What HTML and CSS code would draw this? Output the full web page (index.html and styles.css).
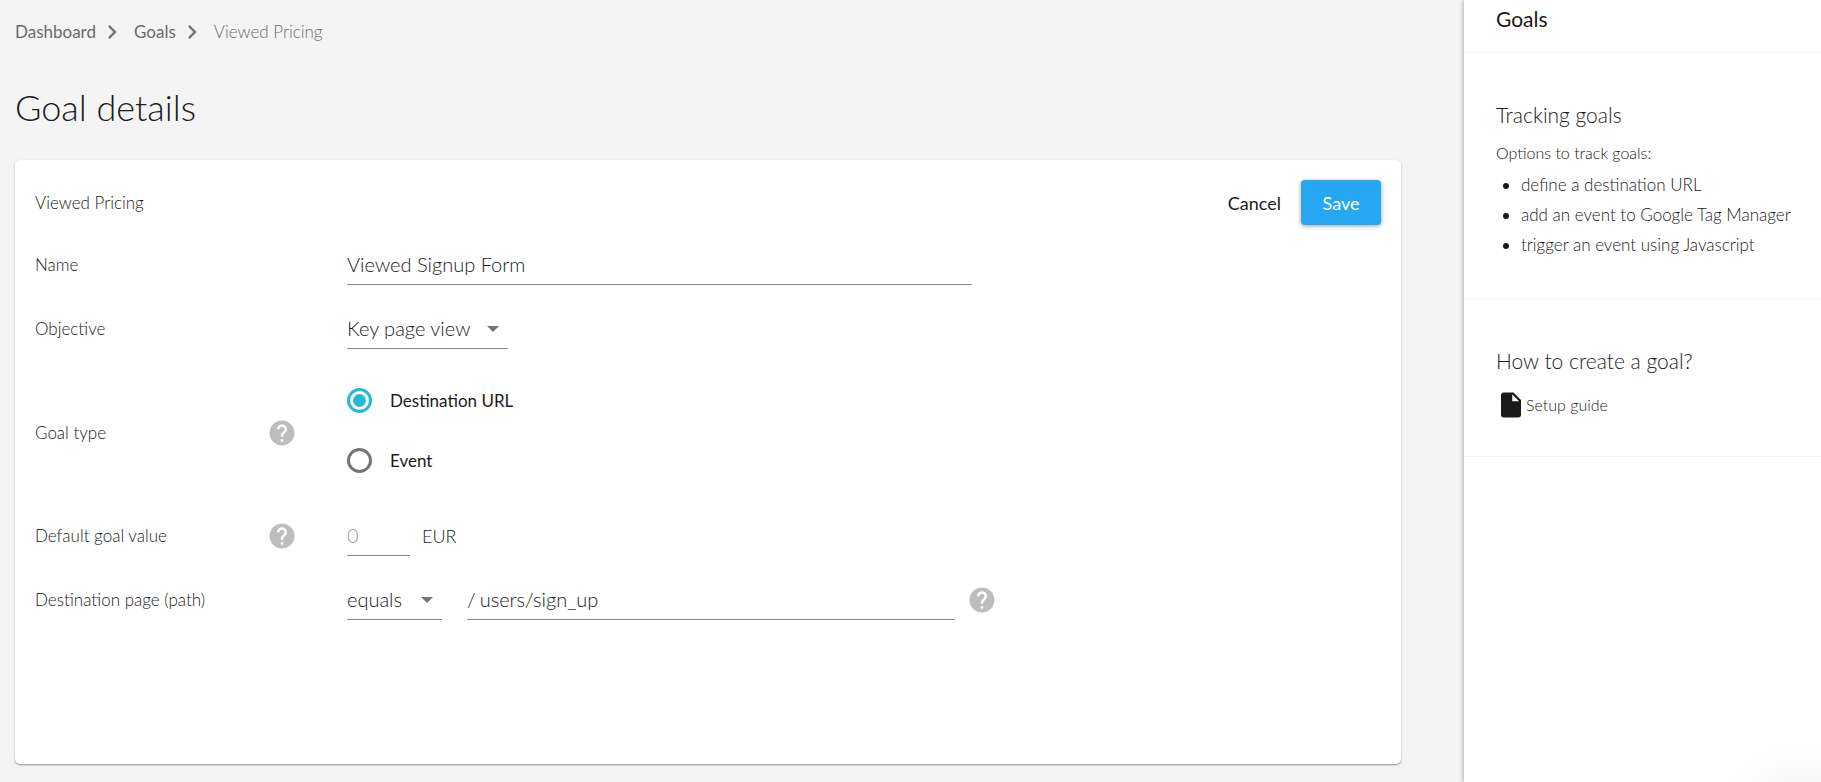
FILE: index.html
```html
<!DOCTYPE html>
<html lang="en">
<head>
<meta charset="utf-8">
<title>Goal details</title>
<link rel="stylesheet" href="styles.css">
</head>
<body>
<svg class="sprite" aria-hidden="true">
  <symbol id="chevron" viewBox="0 0 24 24"><path d="M10 6 8.590 7.410 13.170 12l-4.580 4.590L10 18l6-6z"/></symbol>
  <symbol id="help" viewBox="0 0 24 24"><path d="M12 2C6.480 2 2 6.480 2 12s4.480 10 10 10 10-4.480 10-10S17.520 2 12 2zm1 17h-2v-2h2v2zm2.070-7.750l-.9.920C13.450 12.900 13 13.500 13 15h-2v-.5c0-1.100.450-2.100 1.170-2.830l1.240-1.260c.370-.360.590-.860.590-1.410 0-1.100-.9-2-2-2s-2 .9-2 2H8c0-2.210 1.790-4 4-4s4 1.790 4 4c0 .880-.360 1.680-.930 2.250z"/></symbol>
  <symbol id="arrow" viewBox="0 0 12 6"><path d="M0 0h12L6 6z"/></symbol>
  <symbol id="file" viewBox="0 0 24 24"><path d="M6 2c-1.100 0-1.990.9-1.990 2L4 20c0 1.100.890 2 1.990 2H18c1.100 0 2-.9 2-2V8l-6-6H6zm7 7V3.500L18.500 9H13z"/></symbol>
</svg>
<div class="page">
  <main class="main">
    <nav class="crumbs" aria-label="Breadcrumb">
      <a href="#dashboard">Dashboard</a>
      <svg class="chevron"><use href="#chevron"/></svg>
      <a href="#goals">Goals</a>
      <svg class="chevron"><use href="#chevron"/></svg>
      <span class="current">Viewed Pricing</span>
    </nav>
    <h1 class="title">Goal details</h1>
    <form class="card">
      <header class="card-head">
        <h2 class="card-title">Viewed Pricing</h2>
        <button class="btn" type="button">Cancel</button>
        <button class="btn primary" type="button">Save</button>
      </header>
      <div class="rows">
        <div class="row">
          <div class="label"><label for="name">Name</label></div>
          <input class="field name" id="name" type="text" value="Viewed Signup Form">
        </div>
        <div class="row">
          <div class="label"><label for="objective">Objective</label></div>
          <div class="select objective">
            <select class="field" id="objective"><option>Key page view</option></select>
            <svg class="arrow"><use href="#arrow"/></svg>
          </div>
        </div>
        <div class="row" role="radiogroup" aria-labelledby="type-label">
          <div class="label"><span id="type-label">Goal type</span>
            <button class="help" type="button" aria-label="About goal type"><svg><use href="#help"/></svg></button>
          </div>
          <div class="radios">
            <label class="radio"><input type="radio" name="type" checked>Destination URL</label>
            <label class="radio"><input type="radio" name="type">Event</label>
          </div>
        </div>
        <div class="row">
          <div class="label"><label for="value">Default goal value</label>
            <button class="help" type="button" aria-label="About default goal value"><svg><use href="#help"/></svg></button>
          </div>
          <div class="group">
            <input class="field value" id="value" type="text" placeholder="0">
            <span class="unit">EUR</span>
          </div>
        </div>
        <div class="row">
          <div class="label"><label for="path">Destination page (path)</label></div>
          <div class="group">
            <div class="select match">
              <select class="field" aria-label="Match type"><option>equals</option></select>
              <svg class="arrow"><use href="#arrow"/></svg>
            </div>
            <div class="path"><span>/</span><input class="path-input" id="path" type="text" value="users/sign_up"></div>
            <button class="help" type="button" aria-label="About destination page"><svg><use href="#help"/></svg></button>
          </div>
        </div>
      </div>
    </form>
  </main>
  <aside class="side">
    <h2 class="side-title">Goals</h2>
    <section class="block">
      <h3 class="block-title">Tracking goals</h3>
      <p class="note">Options to track goals:</p>
      <ul class="options">
        <li>define a destination URL</li>
        <li>add an event to Google Tag Manager</li>
        <li>trigger an event using Javascript</li>
      </ul>
    </section>
    <section class="block">
      <h3 class="block-title">How to create a goal?</h3>
      <a class="guide" href="#guide"><svg><use href="#file"/></svg>Setup guide</a>
    </section>
  </aside>
</div>
</body>
</html>
```
FILE: styles.css
```css
*, *::before, *::after { box-sizing: border-box; }

body {
  margin: 0;
  background: #f4f4f4;
  color: #1a1a1a;
  font: 300 17px/24px Lato, sans-serif;
}

h1, h2, h3, p, ul { margin: 0; font-weight: 300; }
button, input, select { font: inherit; color: inherit; }
a { color: inherit; text-decoration: none; }
.sprite { position: absolute; width: 0; height: 0; }

.page { display: flex; min-height: 100vh; }

.main {
  flex: 1;
  min-width: 0;
  display: flex;
  flex-direction: column;
  padding: 18px 63px 18px 15px;
}

.crumbs { display: flex; align-items: center; color: #6b6b6b; font-weight: 400; }
.crumbs .current { font-weight: 300; }
.chevron { width: 28px; height: 28px; margin: 0 8px 0 2px; fill: #757575; }

.title { margin: 38px 0 30px; font-size: 36px; line-height: 46px; }

.card {
  flex: 1;
  padding: 20px;
  background: #fff;
  border-radius: 5px;
  box-shadow: 0 1px 2px rgba(0, 0, 0, .4);
}

.card-head { display: flex; align-items: center; }
.card-title { flex: 1; font-size: 17px; }

.btn {
  height: 45px;
  padding: 0 20px;
  border: 0;
  border-radius: 4px;
  background: none;
  font-size: 18px;
  font-weight: 400;
}
.btn.primary {
  min-width: 80px;
  background: #27a6f2;
  color: #fff;
  box-shadow: 0 1px 4px rgba(0, 0, 0, .4);
}

.rows { display: grid; gap: 24px; padding-top: 20px; }
.row { display: grid; grid-template-columns: 312px minmax(0, 1fr); align-items: center; }
.label { display: flex; align-items: center; justify-content: space-between; padding-right: 50px; }

.field {
  height: 40px;
  padding: 0 0 2px;
  border: 0;
  border-bottom: 1px solid #8c8c8c;
  border-radius: 0;
  outline: 0;
  background: none;
  appearance: none;
  font-size: 20px;
}
.name { width: 100%; max-width: 625px; }
.value { width: 63px; }
.value::placeholder { color: #999; opacity: 1; }

.select { display: grid; }
.select > * { grid-area: 1 / 1; }
.objective { width: 161px; }
.match { width: 95px; }
.arrow {
  align-self: center;
  justify-self: end;
  width: 12px;
  height: 6px;
  margin-right: 9px;
  fill: #757575;
  pointer-events: none;
}

.radios { display: grid; gap: 35px; padding: 15px 0 19px; justify-items: start; }
.radio { display: flex; align-items: center; gap: 18px; font-weight: 400; }
.radio input {
  display: grid;
  place-items: center;
  width: 25px;
  height: 25px;
  margin: 0;
  border: 3px solid #757575;
  border-radius: 50%;
  appearance: none;
}
.radio input:checked { border-color: #26b9d3; }
.radio input:checked::before {
  content: "";
  width: 13px;
  height: 13px;
  border-radius: 50%;
  background: #26b9d3;
}

.help { display: flex; padding: 0; border: 0; background: none; }
.help svg { width: 30px; height: 30px; fill: #bdbdbd; }

.group { display: flex; align-items: center; }
.unit { padding-left: 12px; font-size: 18px; }
.path {
  display: flex;
  align-items: center;
  gap: 4px;
  flex: 0 1 488px;
  min-width: 0;
  height: 40px;
  margin: 0 12px 0 25px;
  padding-bottom: 2px;
  border-bottom: 1px solid #8c8c8c;
  font-size: 20px;
}
.path-input { flex: 1; min-width: 0; padding: 0; border: 0; outline: 0; background: none; }

.side {
  width: 357px;
  background: radial-gradient(circle 90px at calc(100% - 16px) calc(100% + 50px), #eee, #fff);
  box-shadow: 0 0 5px rgba(0, 0, 0, .4);
}
.side-title {
  padding: 7px 32px 21px;
  border-bottom: 1px solid #f2f2f2;
  font-size: 21px;
  font-weight: 400;
}
.block { padding: 47px 24px 36px 32px; border-bottom: 1px solid #f2f2f2; }
.block-title { font-size: 21px; line-height: 30px; }
.note { padding-top: 11px; font-size: 16px; }
.options { padding: 5px 0 2px 25px; line-height: 30px; }
.guide { display: flex; align-items: center; padding-top: 14px; font-size: 16px; }
.guide svg { width: 30px; height: 30px; fill: #1a1a1a; }
```
